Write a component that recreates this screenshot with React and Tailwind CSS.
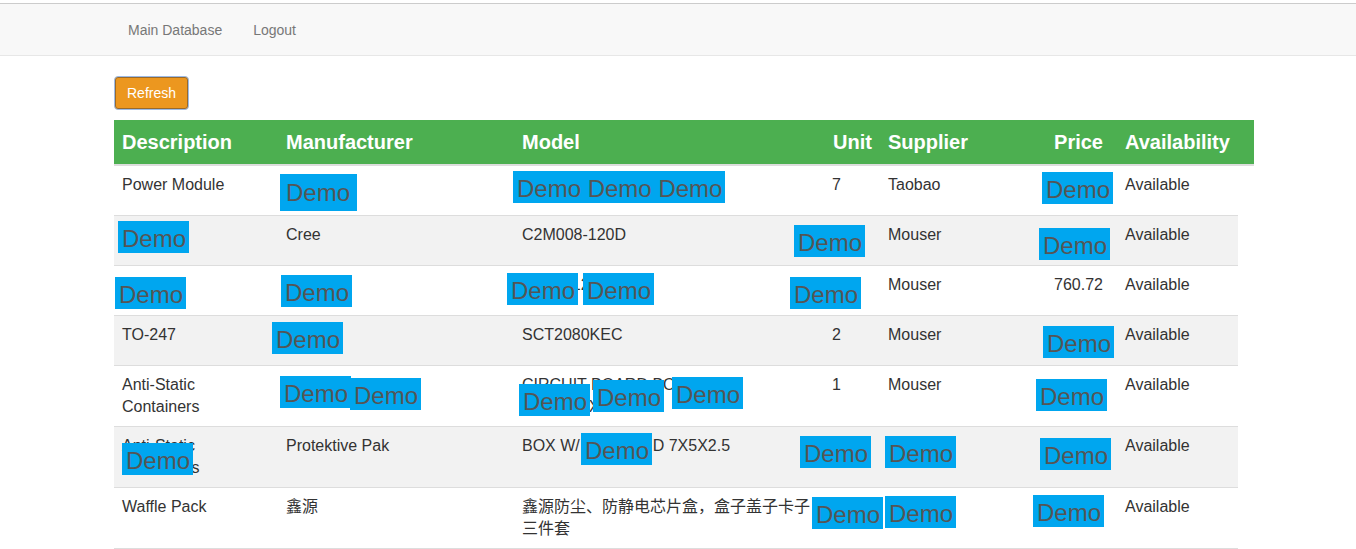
import React from 'react';

const rows = [
  { desc: 'Power Module', mfr: 'Cree', model: '', unit: '7', supplier: 'Taobao', price: '', avail: 'Available', tall: false },
  { desc: '', mfr: 'Cree', model: 'C2M008-120D', unit: '', supplier: 'Mouser', price: '', avail: 'Available', tall: false },
  { desc: 'Diode', mfr: 'Cree', model: 'C4D20120D', unit: '', supplier: 'Mouser', price: '760.72', avail: 'Available', tall: false },
  { desc: 'TO-247', mfr: 'ROHM', model: 'SCT2080KEC', unit: '2', supplier: 'Mouser', price: '', avail: 'Available', tall: false },
  { desc: 'Anti-Static Containers', mfr: 'Protektive Pak', model: ['CIRCUIT BOARD BOX PPM', 'BOX 7X5X2.5'], unit: '1', supplier: 'Mouser', price: '', avail: 'Available', tall: true },
  { desc: 'Anti-Static Containers', mfr: 'Protektive Pak', model: 'BOX W/ HINGE LID 7X5X2.5', unit: '', supplier: '', price: '', avail: 'Available', tall: true },
  { desc: 'Waffle Pack', mfr: '鑫源', model: '鑫源防尘、防静电芯片盒，盒子盖子卡子三件套', unit: '', supplier: '', price: '', avail: 'Available', tall: true },
];

// redaction labels drawn over the table
const demos = [
  { x: 280, y: 171, w: 77, h: 37, t: 'Demo', pl: 'pl-[6px]', pt: 'pt-[5px]' },
  { x: 513, y: 168, w: 212, h: 32, t: 'Demo Demo Demo' },
  { x: 1042, y: 169, w: 71, h: 32, t: 'Demo' },
  { x: 118, y: 218, w: 71, h: 32, t: 'Demo' },
  { x: 794, y: 222, w: 71, h: 32, t: 'Demo' },
  { x: 1039, y: 225, w: 71, h: 32, t: 'Demo' },
  { x: 115, y: 274, w: 71, h: 32, t: 'Demo' },
  { x: 281, y: 272, w: 71, h: 32, t: 'Demo' },
  { x: 507, y: 270, w: 71, h: 32, t: 'Demo' },
  { x: 583, y: 270, w: 71, h: 32, t: 'Demo' },
  { x: 790, y: 274, w: 71, h: 32, t: 'Demo' },
  { x: 272, y: 319, w: 71, h: 32, t: 'Demo' },
  { x: 1043, y: 323, w: 71, h: 32, t: 'Demo' },
  { x: 280, y: 373, w: 71, h: 32, t: 'Demo' },
  { x: 350, y: 375, w: 71, h: 32, t: 'Demo' },
  { x: 519, y: 381, w: 71, h: 32, t: 'Demo' },
  { x: 593, y: 377, w: 71, h: 32, t: 'Demo' },
  { x: 672, y: 374, w: 71, h: 32, t: 'Demo' },
  { x: 1036, y: 376, w: 71, h: 32, t: 'Demo' },
  { x: 122, y: 440, w: 71, h: 32, t: 'Demo' },
  { x: 581, y: 430, w: 71, h: 32, t: 'Demo' },
  { x: 800, y: 433, w: 71, h: 32, t: 'Demo' },
  { x: 885, y: 433, w: 71, h: 32, t: 'Demo' },
  { x: 1040, y: 435, w: 71, h: 32, t: 'Demo' },
  { x: 812, y: 494, w: 71, h: 32, t: 'Demo' },
  { x: 885, y: 493, w: 71, h: 32, t: 'Demo' },
  { x: 1033, y: 492, w: 71, h: 32, t: 'Demo' },
];

function Row({ r, i }) {
  return (
    <div
      className={`grid grid-cols-[164px_236px_304px_62px_120px_117px_121px] w-[1124px] border-b border-[#dddddd] text-[16px] leading-[22px] text-[#333333] ${
        r.tall ? 'h-[61px]' : 'h-[50px]'
      } ${i % 2 === 1 ? 'bg-[#f2f2f2]' : 'bg-white'}`}
    >
      <div className="px-2 pt-2">{r.desc}</div>
      <div className="px-2 pt-2">{r.mfr}</div>
      <div className="px-2 pt-2">
        {Array.isArray(r.model) ? (
          <>
            {r.model[0]}
            <br />
            {r.model[1]}
          </>
        ) : (
          r.model
        )}
      </div>
      <div className="pl-[14px] pt-2">{r.unit}</div>
      <div className="px-2 pt-2">{r.supplier}</div>
      <div className="pl-2 pr-[14px] pt-2 text-right">{r.price}</div>
      <div className="px-2 pt-2">{r.avail}</div>
    </div>
  );
}

export default function App() {
  return (
    <div className="relative min-h-[549px] bg-white font-['Liberation_Sans','Noto_Sans_CJK_SC',Arial,sans-serif]">
      {/* Navbar */}
      <nav className="mt-[3px] h-[53px] pt-[2px] border-t border-b border-t-[#cccccc] border-b-[#e7e7e7] bg-[#f8f8f8] flex items-center pl-[128px] gap-[31px] text-[14px] text-[#777777]">
        <span>Main Database</span>
        <span>Logout</span>
      </nav>

      <div className="pl-[114px]">
        <button className="mt-[20px] w-[75px] h-[34px] rounded-[4px] border border-[#9cbbe8] bg-[#ec971f] shadow-[inset_0_0_0_1px_#9a6a2a] text-[14px] text-white">
          Refresh
        </button>

        {/* Table header */}
        <div className="mt-[10px] grid grid-cols-[164px_236px_304px_62px_120px_117px_137px] w-[1140px] h-[46px] bg-[#4caf50] border-b-2 border-[#dddddd] text-[20px] leading-[28px] font-bold text-white">
          <div className="px-2 pt-2">Description</div>
          <div className="px-2 pt-2">Manufacturer</div>
          <div className="px-2 pt-2">Model</div>
          <div className="px-2 pt-2 text-right">Unit</div>
          <div className="px-2 pt-2">Supplier</div>
          <div className="pl-2 pr-[14px] pt-2 text-right">Price</div>
          <div className="px-2 pt-2">Availability</div>
        </div>

        {rows.map((r, i) => (
          <Row key={i} r={r} i={i} />
        ))}
      </div>

      {demos.map((d, i) => (
        <div
          key={i}
          className={`absolute bg-[#00a6ef] text-[24px] leading-[28px] text-[#555555] whitespace-nowrap ${d.pl || 'pl-[4px]'} ${d.pt || 'pt-[4px]'}`}
          style={{ left: d.x, top: d.y, width: d.w, height: d.h }}
        >
          {d.t}
        </div>
      ))}
    </div>
  );
}
